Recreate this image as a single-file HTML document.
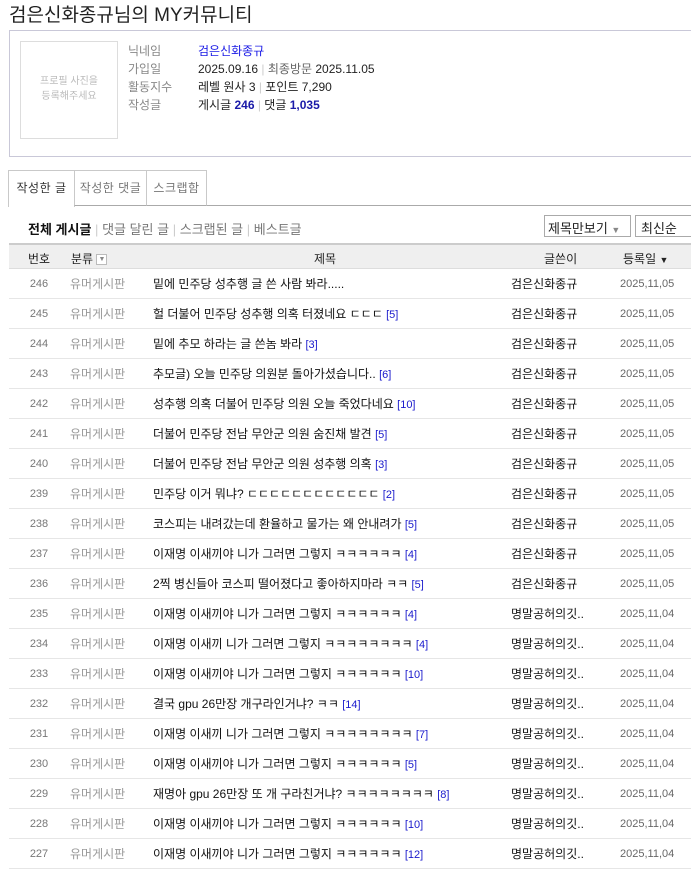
<!DOCTYPE html><html><head><meta charset="utf-8"><style>
*{margin:0;padding:0;box-sizing:border-box}
body{width:691px;height:871px;overflow:hidden;background:#fff;font-family:"Liberation Sans","Noto Sans CJK KR",sans-serif;color:#222;position:relative;font-size:12px}
.a{position:absolute;white-space:nowrap}
h1{position:absolute;left:9px;top:0;font-size:19px;font-weight:normal;color:#222}
.box{position:absolute;left:9px;top:30px;width:700px;height:127px;border:1px solid #c9c8d8}
.ph{position:absolute;left:20px;top:41px;width:98px;height:98px;border:1px solid #ddd;color:#bbb;font-size:10px;text-align:center;padding-top:32px;line-height:15px}
.lb{color:#888;font-size:12px}
.tab{position:absolute;top:170px;height:36px;border:1px solid #c9c9c9;border-bottom:none;color:#777;font-size:12px;letter-spacing:0.5px;text-align:center;line-height:34px;background:#fff}
.tl{position:absolute;left:9px;top:205px;width:690px;border-top:1px solid #aaa}
.row{position:absolute;left:9px;width:690px;height:30px;border-bottom:1px solid #e6e6e6;font-size:12px}
.row span{position:absolute;top:0;line-height:30px;white-space:nowrap}
.n{left:0;width:60px;text-align:center;color:#777;font-size:11px}
.c{left:61px;color:#999}
.t{left:144px;color:#111}
.t b{color:#1a1acc;font-weight:normal;font-size:11px}
.w{left:502px;color:#111}
.d{left:611px;color:#666;font-size:11px}
</style></head><body>
<h1>검은신화종규님의 MY커뮤니티</h1>
<div class="box"></div>
<div class="ph">프로필 사진을<br>등록해주세요</div>
<div class="a lb" style="left:128px;top:42px">닉네임</div><div class="a" style="left:198px;top:42px;color:#1a1ae6">검은신화종규</div>
<div class="a lb" style="left:128px;top:60px">가입일</div><div class="a" style="left:198px;top:60px">2025.09.16 <span style="color:#ccc">|</span> <span style="color:#666">최종방문</span> 2025.11.05</div>
<div class="a lb" style="left:128px;top:78px">활동지수</div><div class="a" style="left:198px;top:78px">레벨 원사 3 <span style="color:#ccc">|</span> 포인트 7,290</div>
<div class="a lb" style="left:128px;top:96px">작성글</div><div class="a" style="left:198px;top:96px">게시글 <b style="color:#1a1aa8">246</b> <span style="color:#ccc">|</span> 댓글 <b style="color:#1a1aa8">1,035</b></div>
<div class="tl"></div>
<div class="tab" style="left:8px;width:67px;height:37px;color:#333">작성한 글</div>
<div class="tab" style="left:74px;width:73px;border-bottom:1px solid #aaa">작성한 댓글</div>
<div class="tab" style="left:146px;width:61px;border-bottom:1px solid #aaa">스크랩함</div>
<div class="a" style="left:28px;top:219px;font-size:13px"><b style="color:#111">전체 게시글</b> <span style="color:#ccc">|</span> <span style="color:#777">댓글 달린 글</span> <span style="color:#ccc">|</span> <span style="color:#777">스크랩된 글</span> <span style="color:#ccc">|</span> <span style="color:#777">베스트글</span></div>
<div class="a" style="left:544px;top:215px;width:87px;height:22px;border:1px solid #aaa;padding:2px 3px;font-size:13px">제목만보기 <span style="color:#888;font-size:9px">▼</span></div>
<div class="a" style="left:635px;top:215px;width:70px;height:22px;border:1px solid #aaa;padding:2px 5px;font-size:13px">최신순</div>
<div class="a" style="left:9px;top:243px;width:690px;height:26px;background:#efefef;border-top:2px solid #ccc;border-bottom:1px solid #ddd;font-size:12px">
<span class="a" style="left:19px;top:5px">번호</span><span class="a" style="left:62px;top:5px">분류 <span style="display:inline-block;width:11px;height:11px;border:1px solid #bbb;background:#fff;font-size:7px;color:#888;vertical-align:middle;text-align:center;line-height:9px">▼</span></span>
<span class="a" style="left:305px;top:5px">제목</span><span class="a" style="left:535px;top:5px">글쓴이</span><span class="a" style="left:614px;top:5px">등록일 <span style="font-size:9px">▼</span></span></div>
<div id="rows"></div>
<script>
var d=[["246","밑에 민주당 성추행 글 쓴 사람 봐라.....","","검은신화종규","2025,11,05"],
["245","헐 더불어 민주당 성추행 의혹 터졌네요 ㄷㄷㄷ","[5]","검은신화종규","2025,11,05"],
["244","밑에 추모 하라는 글 쓴놈 봐라","[3]","검은신화종규","2025,11,05"],
["243","추모글) 오늘 민주당 의원분 돌아가셨습니다..","[6]","검은신화종규","2025,11,05"],
["242","성추행 의혹 더불어 민주당 의원 오늘 죽었다네요","[10]","검은신화종규","2025,11,05"],
["241","더불어 민주당 전남 무안군 의원 숨진채 발견","[5]","검은신화종규","2025,11,05"],
["240","더불어 민주당 전남 무안군 의원 성추행 의혹","[3]","검은신화종규","2025,11,05"],
["239","민주당 이거 뭐냐? ㄷㄷㄷㄷㄷㄷㄷㄷㄷㄷㄷㄷ","[2]","검은신화종규","2025,11,05"],
["238","코스피는 내려갔는데 환율하고 물가는 왜 안내려가","[5]","검은신화종규","2025,11,05"],
["237","이재명 이새끼야 니가 그러면 그렇지 ㅋㅋㅋㅋㅋㅋ","[4]","검은신화종규","2025,11,05"],
["236","2찍 병신들아 코스피 떨어졌다고 좋아하지마라 ㅋㅋ","[5]","검은신화종규","2025,11,05"],
["235","이재명 이새끼야 니가 그러면 그렇지 ㅋㅋㅋㅋㅋㅋ","[4]","명말공허의깃..","2025,11,04"],
["234","이재명 이새끼 니가 그러면 그렇지 ㅋㅋㅋㅋㅋㅋㅋㅋ","[4]","명말공허의깃..","2025,11,04"],
["233","이재명 이새끼야 니가 그러면 그렇지 ㅋㅋㅋㅋㅋㅋ","[10]","명말공허의깃..","2025,11,04"],
["232","결국 gpu 26만장 개구라인거냐? ㅋㅋ","[14]","명말공허의깃..","2025,11,04"],
["231","이재명 이새끼 니가 그러면 그렇지 ㅋㅋㅋㅋㅋㅋㅋㅋ","[7]","명말공허의깃..","2025,11,04"],
["230","이재명 이새끼야 니가 그러면 그렇지 ㅋㅋㅋㅋㅋㅋ","[5]","명말공허의깃..","2025,11,04"],
["229","재명아 gpu 26만장 또 개 구라친거냐? ㅋㅋㅋㅋㅋㅋㅋㅋ","[8]","명말공허의깃..","2025,11,04"],
["228","이재명 이새끼야 니가 그러면 그렇지 ㅋㅋㅋㅋㅋㅋ","[10]","명말공허의깃..","2025,11,04"],
["227","이재명 이새끼야 니가 그러면 그렇지 ㅋㅋㅋㅋㅋㅋ","[12]","명말공허의깃..","2025,11,04"]];
var h="";d.forEach(function(r,i){h+='<div class="row" style="top:'+(269+i*30)+'px"><span class="n">'+r[0]+'</span><span class="c">유머게시판</span><span class="t">'+r[1]+' <b>'+r[2]+'</b></span><span class="w">'+r[3]+'</span><span class="d">'+r[4]+'</span></div>'});
document.getElementById("rows").innerHTML=h;
</script>
</body></html>
